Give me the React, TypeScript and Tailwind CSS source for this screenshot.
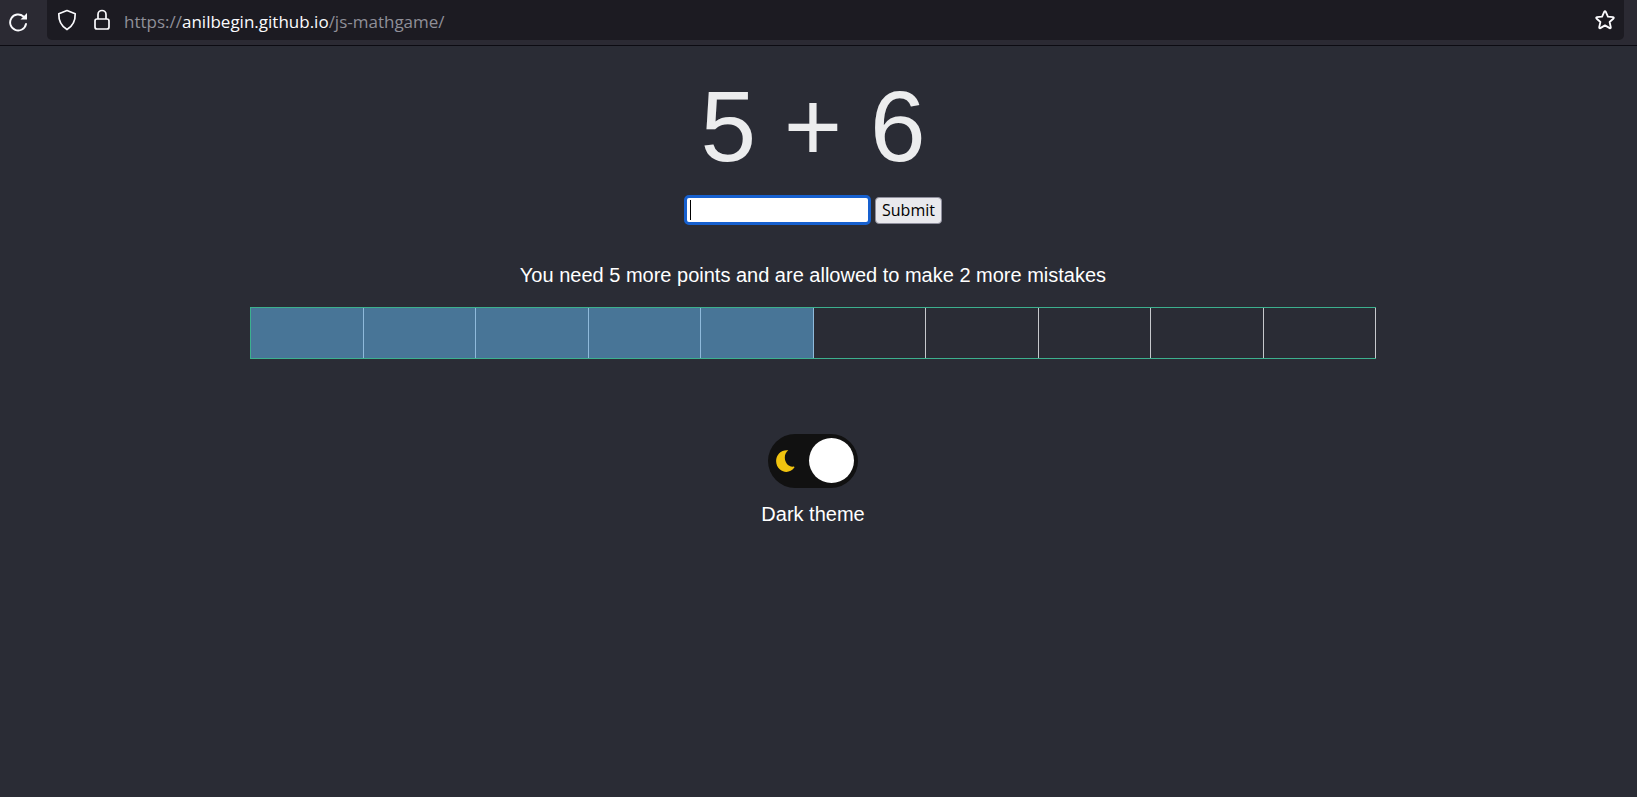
import { useState } from "react";

const SEGMENTS = Array.from({ length: 10 }, (_, i) => i);

function AddressBar() {
  return (
    <header className="flex h-[46px] items-start border-b border-[#0c0b12] bg-[#2b2a33] pr-[13px] text-[#fbfbfe]">
      <button type="button" aria-label="Reload" className="flex h-10 w-[47px] items-center pt-1 pl-2">
        <svg width="20" height="20" viewBox="0 0 20 20" fill="none" stroke="currentColor" strokeWidth="1.9">
          <path d="M18 12A8 8 0 1 1 15.500 4.500" strokeLinecap="round" />
          <path d="M19 1v6.500h-6.500z" fill="currentColor" stroke="none" />
        </svg>
      </button>
      <div className="flex h-10 grow items-center rounded-b-[5px] bg-[#1c1b22] pr-[9px] pl-[10px]">
        <svg width="20" height="22" viewBox="0 0 20 22" fill="none" stroke="currentColor" strokeWidth="1.7" strokeLinejoin="round" aria-hidden="true">
          <path d="M10 1.5 18.2 4.8C18.4 11.5 16 17 10 20.6 4 17 1.6 11.5 1.8 4.8z" />
        </svg>
        <svg className="ml-4" width="18" height="22" viewBox="0 0 18 22" fill="none" stroke="currentColor" strokeWidth="1.7" aria-hidden="true">
          <rect x="2" y="10" width="14" height="10" rx="2" />
          <path d="M5 10V5.5a4 4 0 0 1 8 0V10" />
        </svg>
        <p className="ml-[13px] grow pt-1 font-['Open_Sans',sans-serif] text-[17px] leading-6 text-[#8f8f98]">
          https://<span className="text-[#fbfbfe]">anilbegin.github.io</span>/js-mathgame/
        </p>
        <button type="button" aria-label="Bookmark this page">
          <svg width="20" height="20" viewBox="0 0 20 20" fill="none" stroke="currentColor" strokeWidth="1.8" strokeLinejoin="round">
            <path d="M9.2 1.8q.8-1.2 1.6 0l2.1 4.9 5.2.5q1.3.3.4 1.3l-3.9 3.5 1.2 5.200q.1 1.400-1.100.900L10 15.400l-4.700 2.700q-1.200.500-1.100-.900l1.200-5.200L1.500 8.500q-.9-1 .4-1.300l5.200-.5z" />
          </svg>
        </button>
      </div>
    </header>
  );
}

export default function App() {
  const [answer, setAnswer] = useState("");
  const [dark, setDark] = useState(true);

  return (
    <div className="flex min-h-screen flex-col bg-[#2a2c35] font-['Liberation_Sans',Arial,sans-serif]">
      <AddressBar />
      <main className="flex flex-col items-center pt-5 pr-[11px] text-xl text-white">
        <h1 className="text-[100px] leading-[120px] text-[#ecedee]">5 + 6</h1>
        <form className="mt-[9px] flex h-[30px] items-center gap-1" onSubmit={(e) => e.preventDefault()}>
          <div className="relative">
            <input
              type="text"
              aria-label="Your answer"
              autoFocus
              value={answer}
              onChange={(e) => setAnswer(e.target.value)}
              className="block h-[30px] w-[187px] rounded-[5px] border-[3px] border-[#1660cf] bg-white px-[3px] text-[17px] text-black caret-transparent outline-none focus:not-placeholder-shown:caret-black"
              placeholder=" "
            />
            {answer === "" && <span className="pointer-events-none absolute top-[5px] left-1.5 h-5 w-px bg-black" />}
          </div>
          <button type="submit" className="h-[27px] rounded border border-[#8f8f9d] bg-[#e9e9ed] px-[6px] font-['Open_Sans',sans-serif] text-base leading-6 text-black">
            Submit
          </button>
        </form>
        <p className="mt-9 leading-7">You need 5 more points and are allowed to make 2 more mistakes</p>
        <div className="relative mt-[18px] flex h-[52px] w-full max-w-[1126px] border-y border-l border-[#3cb08e]">
          <div className="absolute inset-y-0 left-0 w-1/2 bg-[#487597]" />
          {SEGMENTS.map((i) => (
            <div key={i} className={i < 5 ? "relative grow border-r border-[#8fbadb]" : "relative grow border-r border-[#c6c8cc]"} />
          ))}
        </div>
        <label className="mt-[75px] flex flex-col items-center">
          <input type="checkbox" checked={dark} onChange={(e) => setDark(e.target.checked)} className="peer sr-only" />
          <span className="flex h-[54px] w-[90px] items-start justify-between rounded-full bg-[#111] pt-1 pr-1 pl-2">
            <svg className="mt-3" width="20" height="22" viewBox="0 0 20 22" fill="#f1c40f" aria-hidden="true">
              <path d="M12.300.3C6 4.500 8.500 17.500 17.700 16.600q1.300 0 .5 1.200C14.800 22.600 8.300 23.200 4 19.500-.8 15.500-1.200 8 3 3.500 5.500.8 9-.2 12.300.3z" />
            </svg>
            <span className="size-[45px] rounded-full bg-white" />
          </span>
          <span className="mt-3 leading-7">Dark theme</span>
        </label>
      </main>
    </div>
  );
}
